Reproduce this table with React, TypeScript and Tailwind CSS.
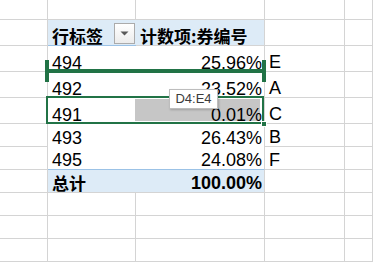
const NUM = "font-['Liberation_Sans_Narrow','Liberation_Sans',sans-serif] text-[18px] leading-none"
const CJK = "font-['Noto_Sans_CJK_SC',sans-serif] text-[17px] leading-none font-bold"

const GRID = 'border-[#d4d4d4]'
const COLS = 'grid grid-cols-[48px_88px_129px_80px_1fr]'

const ROWS = [
  { label: '494', pct: '25.96%', code: 'E', h: 'h-[26px]' },
  { label: '492', pct: '23.52%', code: 'A', h: 'h-[26px]' },
  { label: '491', pct: '0.01%', code: 'C', h: 'h-[26px]' },
  { label: '493', pct: '26.43%', code: 'B', h: 'h-[23px]' },
  { label: '495', pct: '24.08%', code: 'F', h: 'h-[23px]' },
]

function BlankRow({ h }: { h: string }) {
  return (
    <div className={`${COLS} ${h}`}>
      {[0, 1, 2, 3, 4].map((i) => (
        <div key={i} className={`border-r border-b ${GRID}`} />
      ))}
    </div>
  )
}

function FilterButton() {
  return (
    <div className="w-[21px] h-[21px] mr-[1px] mb-[1px] border border-[#ababab] bg-gradient-to-b from-white to-[#ececec] flex items-center justify-center">
      <svg width="9" height="5" viewBox="0 0 9 5">
        <path d="M0.5 0.5h8L4.5 4.5z" fill="#595959" />
      </svg>
    </div>
  )
}

export default function App() {
  return (
    <div className="relative w-[373px] h-[262px] overflow-hidden bg-white text-black">
      <BlankRow h="h-[20px]" />

      {/* pivot header */}
      <div className={`${COLS} h-[26px]`}>
        <div className={`border-r border-b ${GRID}`} />
        <div className="bg-[#ddebf7] border-b border-[#9bc2e6] flex items-end justify-between pl-[4px]">
          <span className={`${CJK} pb-[1px]`}>行标签</span>
          <FilterButton />
        </div>
        <div className={`bg-[#ddebf7] border-b border-[#9bc2e6] border-r ${GRID} flex items-end pl-[4px]`}>
          <span className={`${CJK} pb-[1px]`}>计数项:券编号</span>
        </div>
        <div className={`border-r border-b ${GRID}`} />
        <div className={`border-r border-b ${GRID}`} />
      </div>

      {ROWS.map((r, i) => {
        const last = i === ROWS.length - 1
        return (
          <div key={r.label} className={`${COLS} ${r.h}`}>
            <div className={`border-r border-b ${GRID}`} />
            <div className={`flex items-end pl-[4px] ${last ? 'border-b border-[#9bc2e6]' : ''}`}>
              <span className={NUM}>{r.label}</span>
            </div>
            <div className={`relative flex items-end justify-end pr-[2px] border-r ${GRID} ${last ? 'border-b border-b-[#9bc2e6]' : ''}`}>
              {r.label === '491' && <div className="absolute left-[-1px] top-[1px] w-[125px] h-[22px] bg-[#c6c6c6]" />}
              <span className={`relative ${NUM}`}>{r.pct}</span>
            </div>
            <div className={`flex items-end pl-[4px] border-r border-b ${GRID}`}>
              <span className={NUM}>{r.code}</span>
            </div>
            <div className={`border-r border-b ${GRID}`} />
          </div>
        )
      })}

      {/* grand total */}
      <div className={`${COLS} h-[23px]`}>
        <div className={`border-r border-b ${GRID}`} />
        <div className={`bg-[#ddebf7] border-b ${GRID} flex items-end pl-[4px]`}>
          <span className={`${CJK} pb-[1px]`}>总计</span>
        </div>
        <div className={`bg-[#ddebf7] border-b border-r ${GRID} flex items-end justify-end pr-[2px]`}>
          <span className={`${NUM} font-bold`}>100.00%</span>
        </div>
        <div className={`border-r border-b ${GRID}`} />
        <div className={`border-r border-b ${GRID}`} />
      </div>

      <BlankRow h="h-[23px]" />
      <BlankRow h="h-[23px]" />
      <BlankRow h="h-[23px]" />

      {/* drop insertion marker */}
      <div className="absolute left-[45px] top-[69px] w-[221px] h-[4px] bg-[#217346]" />
      <div className="absolute left-[45px] top-[60px] w-[4px] h-[22px] bg-[#217346]" />
      <div className="absolute left-[262px] top-[60px] w-[4px] h-[22px] bg-[#217346]" />

      {/* active selection */}
      <div className="absolute left-[46px] top-[96px] w-[218px] h-[28px] border-2 border-[#217346]" />
      <div className="absolute left-[261px] top-[121px] w-[6px] h-[6px] bg-[#217346] border border-white" />

      {/* range tooltip */}
      <div className="absolute left-[169px] top-[89px] w-[49px] h-[20px] bg-white border border-[#bdbdbd] shadow-[1px_1px_2px_rgba(0,0,0,0.2)] flex items-center justify-center font-['Liberation_Sans',sans-serif] text-[13px] text-[#3b3b3b]">
        D4:E4
      </div>
    </div>
  )
}
